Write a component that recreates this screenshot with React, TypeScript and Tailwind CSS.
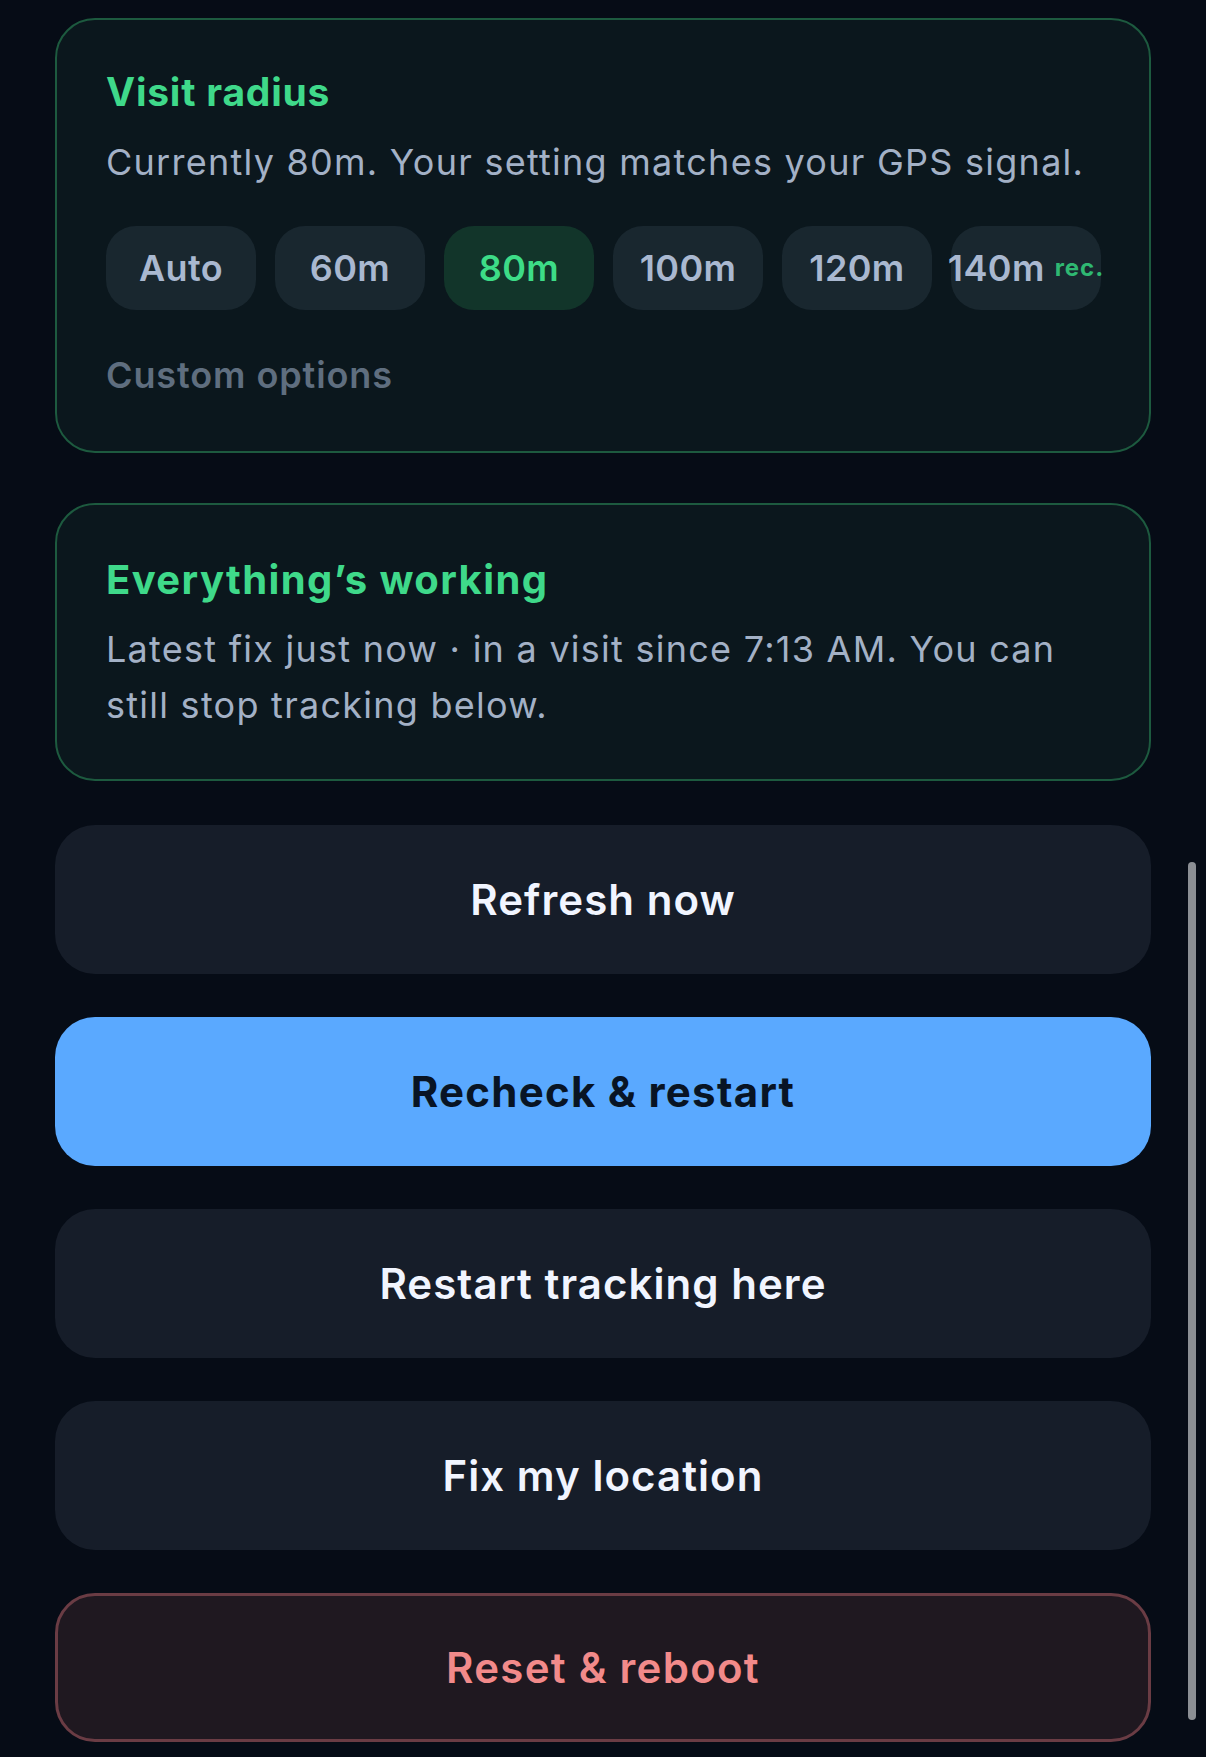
const radii = ['Auto', '60m', '80m', '100m', '120m', '140m'];

function RadiusChip({ label, active, rec }: { label: string; active?: boolean; rec?: boolean }) {
  return (
    <button
      className={`flex-1 min-w-0 h-[84px] rounded-[30px] flex items-center justify-center whitespace-nowrap text-[36px] font-semibold tracking-[0.01em] ${
        active ? 'bg-[#12352a] text-[#3ddc87]' : 'bg-[#19272f] text-[#a9b8d0]'
      }`}
    >
      {label}
      {rec && <span className="ml-[10px] text-[24px] font-bold tracking-[0.04em] text-[#2fb872]">rec.</span>}
    </button>
  );
}

function ActionButton({ label, variant }: { label: string; variant?: 'primary' | 'danger' }) {
  const styles =
    variant === 'primary'
      ? 'bg-[#5aa9ff] text-[#081424] font-bold tracking-[0.03em]'
      : variant === 'danger'
        ? 'bg-[#1f1820] border-[3px] border-[#6a3c44] text-[#f28a8a] font-semibold tracking-[0.03em]'
        : 'bg-[#161d29] text-[#f1f5ff] font-semibold tracking-[0.025em]';
  return (
    <button className={`w-full h-[149px] rounded-[40px] flex items-center justify-center text-[42px] ${styles}`}>
      {label}
    </button>
  );
}

export default function App() {
  return (
    <div
      className="relative min-h-[1757px] bg-[#060c16] px-[55px] pt-[18px]"
      style={{ fontFamily: 'Inter, "Noto Sans", sans-serif' }}
    >
      <div className="rounded-[40px] border-2 border-[#1d5a3f] bg-[#0b171d] pl-[49px] pr-[48px] pt-[49px] pb-[48px]">
        <h2 className="text-[39px] leading-[46px] font-bold tracking-[0.02em] text-[#3fd98a]">Visit radius</h2>
        <p className="mt-[19px] text-[36px] leading-[56px] tracking-[0.035em] text-[#a3b1c6]">
          Currently 80m. Your setting matches your GPS signal.
        </p>
        <div className="mt-[36px] flex gap-[19px]">
          {radii.map((r) => (
            <RadiusChip key={r} label={r} active={r === '80m'} rec={r === '140m'} />
          ))}
        </div>
        <p className="mt-[37px] text-[36px] leading-[56px] font-semibold tracking-[0.025em] text-[#5f6e7f]">
          Custom options
        </p>
      </div>

      <div className="mt-[50px] rounded-[40px] border-2 border-[#1d5a3f] bg-[#0b171d] pl-[49px] pr-[48px] pt-[52px] pb-[46px]">
        <h2 className="text-[40px] leading-[46px] font-bold tracking-[0.035em] text-[#3fd98a]">Everything’s working</h2>
        <p className="mt-[18px] text-[36px] leading-[56px] tracking-[0.035em] text-[#a3b1c6]">
          Latest fix just now · in a visit since 7:13 AM. You can still stop tracking below.
        </p>
      </div>

      <div className="mt-[44px] flex flex-col gap-[43px]">
        <ActionButton label="Refresh now" />
        <ActionButton label="Recheck & restart" variant="primary" />
        <ActionButton label="Restart tracking here" />
        <ActionButton label="Fix my location" />
        <ActionButton label="Reset & reboot" variant="danger" />
      </div>

      {/* scroll indicator */}
      <div className="absolute left-[1188px] top-[862px] w-[8px] h-[858px] rounded-full bg-[#8b8f94]" />
    </div>
  );
}
